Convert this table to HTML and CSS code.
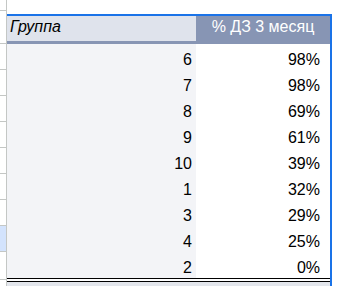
FILE: index.html
```html
<!DOCTYPE html>
<html lang="ru">
<head>
<meta charset="utf-8">
<title>Группа — % ДЗ 3 месяц</title>
<link rel="stylesheet" href="styles.css">
</head>
<body>
<div class="sheet">
  <div class="gutter">
    <div class="g g-top"></div>
    <div class="g g-head"></div>
    <div class="g"></div>
    <div class="g"></div>
    <div class="g"></div>
    <div class="g"></div>
    <div class="g"></div>
    <div class="g"></div>
    <div class="g"></div>
    <div class="g g-sel"></div>
    <div class="g g-last"></div>
  </div>
  <div class="area">
    <div class="spacer"></div>
    <div class="pivot">
      <div class="row head">
        <div class="cell c1">Группа</div>
        <div class="cell c2">% ДЗ 3 месяц</div>
      </div>
      <div class="row"><div class="cell c1">6</div><div class="cell c2">98%</div></div>
      <div class="row"><div class="cell c1">7</div><div class="cell c2">98%</div></div>
      <div class="row"><div class="cell c1">8</div><div class="cell c2">69%</div></div>
      <div class="row"><div class="cell c1">9</div><div class="cell c2">61%</div></div>
      <div class="row"><div class="cell c1">10</div><div class="cell c2">39%</div></div>
      <div class="row"><div class="cell c1">1</div><div class="cell c2">32%</div></div>
      <div class="row"><div class="cell c1">3</div><div class="cell c2">29%</div></div>
      <div class="row"><div class="cell c1">4</div><div class="cell c2">25%</div></div>
      <div class="row last"><div class="cell c1">2</div><div class="cell c2">0%</div></div>
      <div class="total"></div>
    </div>
  </div>
</div>
</body>
</html>
```
FILE: styles.css
```css
html, body {
  margin: 0;
  padding: 0;
  background: #ffffff;
}

.sheet {
  display: flex;
  width: 343px;
  height: 286px;
  overflow: hidden;
  font-family: "Liberation Sans", Arial, sans-serif;
  font-size: 16px;
  color: #000000;
}

/* row-number strip on the left */
.gutter {
  width: 6px;
  flex: none;
  border-right: 1px solid #c4c7c5;
  display: flex;
  flex-direction: column;
}
.g {
  height: 25px;
  border-bottom: 1px solid #c4c7c5;
  flex: none;
}
.g-top { height: 10px; }
.g-head { height: 32px; }
.g-sel { background: #d3e3fd; }
.g-last { height: 27px; }

.area {
  flex: none;
  width: 336px;
  display: flex;
  flex-direction: column;
}
.spacer { height: 14px; flex: none; }

/* pivot table */
.pivot {
  width: 323px;
  border-top: 2px solid #1a73e8;
  border-right: 2px solid #1a73e8;
  flex: 1;
  display: flex;
  flex-direction: column;
}

.row {
  display: flex;
  height: 26px;
  flex: none;
  box-sizing: border-box;
}
.cell {
  line-height: 18px;
  padding-bottom: 1px;
  display: flex;
  align-items: flex-end;
  justify-content: flex-end;
  box-sizing: border-box;
}
.c1 {
  width: 189px;
  padding-right: 4px;
  background: #f3f4f7;
}
.c2 {
  width: 134px;
  padding-right: 10px;
}

.head {
  height: 28px;
  border-bottom: 3px solid #8795b4;
}
.head .cell { padding-bottom: 5px; }
.head .c1 {
  background: #dfe3ec;
  justify-content: flex-start;
  padding-left: 3px;
  font-style: italic;
}
.head .c2 {
  background: #8795b4;
  color: #ffffff;
  justify-content: center;
  padding-right: 0;
}

.last {
  height: 30px;
  border-bottom: 4px double #000000;
}
.total {
  flex: 1;
  background: #e3e6ec;
}
```
